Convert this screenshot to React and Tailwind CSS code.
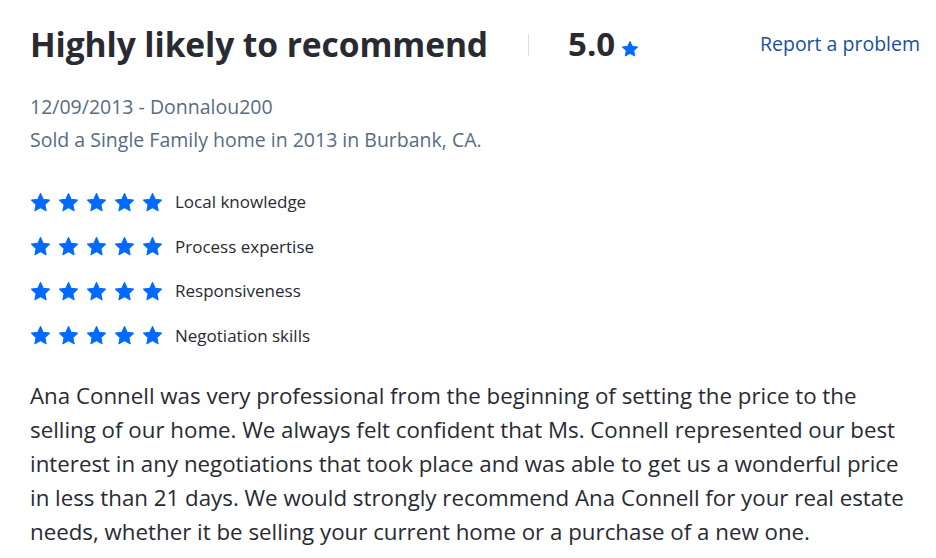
import React from 'react';

const Star = ({ className }) => (
  <svg viewBox="0 0 24 24" className={className} fill="currentColor">
    <path d="M12 1.8l3.1 6.6 7.2.9-5.3 5 1.4 7.1L12 17.9l-6.4 3.5 1.4-7.1-5.3-5 7.2-.9z" strokeLinejoin="round" stroke="currentColor" strokeWidth="1.2" />
  </svg>
);

const ratings = ['Local knowledge', 'Process expertise', 'Responsiveness', 'Negotiation skills'];

export default function App() {
  return (
    <div className="w-[936px] h-[558px] bg-white overflow-hidden px-[30px] pt-[22px] text-[#2a2a33]" style={{ fontFamily: '"Open Sans", sans-serif' }}>
      <div className="flex items-center h-[44px]">
        <h1 className="text-[33.6px] font-bold leading-[44px] tracking-[-0.1px] whitespace-nowrap">Highly likely to recommend</h1>
        <div className="w-px h-[22px] bg-[#dcdce0] ml-[40px] mt-[2px] shrink-0" />
        <div className="ml-[39px] flex items-center">
          <span className="text-[33px] font-bold leading-[44px]">5.0</span>
          <Star className="w-[18px] h-[18px] text-[#006aff] ml-[6px] mt-[10px]" />
        </div>
        <a className="ml-auto -mr-[14px] text-[19.5px] text-[#1c4f9c] leading-[44px] -mt-[1px] whitespace-nowrap">Report a problem</a>
      </div>

      <div className="mt-[24px] text-[19.5px] leading-[33px] text-[#596b82]">
        <div>12/09/2013 - Donnalou200</div>
        <div>Sold a Single Family home in 2013 in Burbank, CA.</div>
      </div>

      <div className="mt-[34px] flex flex-col gap-[20.5px]">
        {ratings.map((r) => (
          <div key={r} className="flex items-center h-[24px]">
            <div className="flex gap-[7px]">
              {[0, 1, 2, 3, 4].map((i) => (
                <Star key={i} className="w-[21px] h-[21px] text-[#006aff]" />
              ))}
            </div>
            <span className="ml-[12px] text-[17px]">{r}</span>
          </div>
        ))}
      </div>

      <p className="mt-[31.5px] w-[880px] text-[22.3px] leading-[34px]">
        Ana Connell was very professional from the beginning of setting the price to the selling of our home. We always felt confident that Ms. Connell represented our best interest in any negotiations that took place and was able to get us a wonderful price in less than 21 days. We would strongly recommend Ana Connell for your real estate needs, whether it be selling your current home or a purchase of a new one.
      </p>
    </div>
  );
}
